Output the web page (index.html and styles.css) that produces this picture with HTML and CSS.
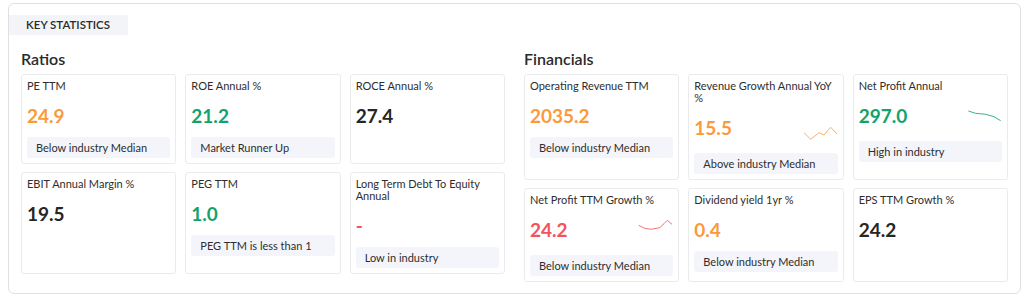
FILE: index.html
```html
<!DOCTYPE html>
<html lang="en">
<head>
    <meta charset="UTF-8">
    <meta name="viewport" content="width=device-width, initial-scale=1.0">
    <title>Key Statistics</title>
    <link rel="stylesheet" href="styles.css">
</head>
<body>
    <div class="stats_box">
      <div class="tab">KEY STATISTICS</div>

      <div class="sections">
        <div class="section">
          <h2>Ratios</h2>
          <div class="grid">
            <div class="card">
              <div class="label">PE TTM</div>
              <div class="value_row"><span class="value orange">24.9</span></div>
              <div class="badge">Below industry Median</div>
            </div>
            <div class="card">
              <div class="label">ROE Annual %</div>
              <div class="value_row"><span class="value green">21.2</span></div>
              <div class="badge">Market Runner Up</div>
            </div>
            <div class="card">
              <div class="label">ROCE Annual %</div>
              <div class="value_row"><span class="value">27.4</span></div>
            </div>
            <div class="card">
              <div class="label">EBIT Annual Margin %</div>
              <div class="value_row"><span class="value">19.5</span></div>
            </div>
            <div class="card">
              <div class="label">PEG TTM</div>
              <div class="value_row"><span class="value green">1.0</span></div>
              <div class="badge">PEG TTM is less than 1</div>
            </div>
            <div class="card">
              <div class="label">Long Term Debt To Equity Annual</div>
              <div class="value_row"><span class="value red">-</span></div>
              <div class="badge">Low in industry</div>
            </div>
          </div>
        </div>

        <div class="section">
          <h2>Financials</h2>
          <div class="grid">
            <div class="card">
              <div class="label">Operating Revenue TTM</div>
              <div class="value_row"><span class="value orange">2035.2</span></div>
              <div class="badge">Below industry Median</div>
            </div>
            <div class="card">
              <div class="label">Revenue Growth Annual YoY %</div>
              <div class="value_row spark_row">
                <span class="value orange">15.5</span>
                <svg class="spark" width="35" height="28" viewBox="0 0 35 28">
                  <polyline points="1,16.7 7.7,23.3 16,16.7 21,19 27.7,11.3 34,18" stroke="#fbb06a"/>
                </svg>
              </div>
              <div class="badge">Above industry Median</div>
            </div>
            <div class="card">
              <div class="label">Net Profit Annual</div>
              <div class="value_row spark_row">
                <span class="value green">297.0</span>
                <svg class="spark" width="35" height="28" viewBox="0 0 35 28">
                  <polyline points="1.3,7 8.7,9.3 18.7,10.3 27,12.7 33.7,16.7" stroke="#3cb489"/>
                </svg>
              </div>
              <div class="badge">High in industry</div>
            </div>
            <div class="card">
              <div class="label">Net Profit TTM Growth %</div>
              <div class="value_row spark_row">
                <span class="value red">24.2</span>
                <svg class="spark" width="35" height="28" viewBox="0 0 35 28">
                  <polyline points="0.7,7.3 6.7,10.3 13.3,11.3 21.7,9.7 26,5.7 29.3,2.3 34,6.3" stroke="#f37077"/>
                </svg>
              </div>
              <div class="badge">Below industry Median</div>
            </div>
            <div class="card">
              <div class="label">Dividend yield 1yr %</div>
              <div class="value_row"><span class="value orange">0.4</span></div>
              <div class="badge">Below industry Median</div>
            </div>
            <div class="card">
              <div class="label">EPS TTM Growth %</div>
              <div class="value_row"><span class="value">24.2</span></div>
            </div>
          </div>
        </div>
      </div>
    </div>
</body>
</html>
```

FILE: styles.css
```css
*{
    box-sizing: border-box;
}
body{
    margin: 0;
    font-family: Lato, "Noto Sans", sans-serif;
    color: #2a2a2a;
    background-color: #ffffff;
}
.stats_box{
    margin: 3px 3px 0 8px;
    width: 1013px;
    border: 1px solid #e0e0e0;
    border-radius: 6px;
    padding: 11px 12px 11px 0;
}
.tab{
    display: inline-block;
    white-space: nowrap;
    vertical-align: top;
    background-color: #f3f4f7;
    font-size: 11.5px;
    font-weight: 600;
    height: 20px;
    line-height: 20px;
    padding: 0 18px 0 17px;
}
.sections{
    display: flex;
    gap: 19px;
    padding-left: 12px;
}
.section{
    flex: 1;
}
h2{
    margin: 14px 0 0 0;
    font-size: 16px;
    font-weight: 600;
    line-height: 20px;
    height: 25px;
}
.grid{
    display: grid;
    grid-template-columns: 1fr 1fr 1fr;
    gap: 8px 9px;
}
.card{
    border: 1px solid #ebebee;
    border-radius: 3px;
    padding: 5px 5px 5px 5px;
}
.label{
    font-size: 11px;
    line-height: 12px;
    color: #2e2e2e;
}
.value_row{
    display: flex;
    justify-content: space-between;
    margin-top: 12px;
}
.value{
    font-size: 19px;
    font-weight: 700;
    line-height: 24px;
    color: #262626;
}
.spark{
    display: block;
    margin-top: 0;
}
.spark polyline{
    fill: none;
    stroke-width: 1;
}
.orange{
    color: #fb9a3b;
}
.green{
    color: #13a26a;
}
.red{
    color: #f2545b;
}
.badge{
    margin-top: 9px;
    background-color: #f4f5fa;
    border-radius: 3px;
    height: 21px;
    line-height: 21px;
    font-size: 11px;
    padding-left: 9px;
    color: #2e2e2e;
}
```
